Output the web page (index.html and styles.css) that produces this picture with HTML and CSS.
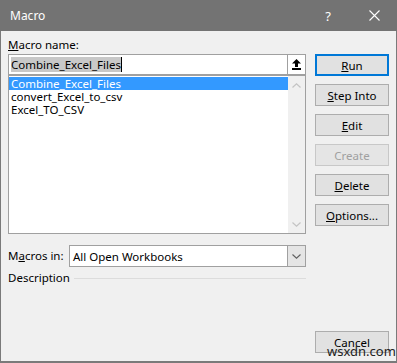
FILE: index.html
```html
<!DOCTYPE html>
<html lang="en">
<head>
    <meta charset="UTF-8">
    <title>Macro</title>
    <link rel="stylesheet" href="styles.css">
</head>
<body>
    <div class="window">
        <div class="titlebar">
            <span class="title">Macro</span>
            <span class="tb-btn help">?</span>
            <span class="tb-btn close">
                <svg width="11" height="11" viewBox="0 0 11 11"><path d="M0.5 0.5 L10.5 10.5 M10.5 0.5 L0.5 10.5" stroke="#fff" stroke-width="1.1" fill="none"/></svg>
            </span>
        </div>
        <div class="content">
            <div class="left">
                <label class="label"><u>M</u>acro name:</label>
                <div class="namebox">
                    <span class="selected-text">Combine_Excel_Files</span><span class="caret"></span>
                    <span class="up-btn">
                        <svg width="9" height="11" viewBox="0 0 9 11"><path d="M4.5 0 L9 4.5 L6 4.5 L6 8 L3 8 L3 4.5 L0 4.5 Z" fill="#000"/><rect x="0" y="9" width="9" height="2" fill="#000"/></svg>
                    </span>
                </div>
                <div class="listbox">
                    <ul class="items">
                        <li class="active">Combine_Excel_Files</li>
                        <li>convert_Excel_to_csv</li>
                        <li>Excel_TO_CSV</li>
                    </ul>
                    <div class="scrollbar">
                        <svg width="9" height="5" viewBox="0 0 9 5"><path d="M0.5 4.5 L4.5 0.8 L8.5 4.5" stroke="#c4c4c4" stroke-width="1.2" fill="none"/></svg>
                        <svg width="9" height="5" viewBox="0 0 9 5"><path d="M0.5 0.5 L4.5 4.2 L8.5 0.5" stroke="#c4c4c4" stroke-width="1.2" fill="none"/></svg>
                    </div>
                </div>
                <div class="row-in">
                    <span class="label">M<u>a</u>cros in:</span>
                    <div class="select">
                        <span class="select-text">All Open Workbooks</span>
                        <span class="drop-btn">
                            <svg width="9" height="5" viewBox="0 0 9 5"><path d="M0.5 0.5 L4.5 4.2 L8.5 0.5" stroke="#606060" stroke-width="1.1" fill="none"/></svg>
                        </span>
                    </div>
                </div>
                <div class="desc">
                    <span class="label">Description</span>
                    <span class="rule"></span>
                </div>
            </div>
            <div class="right">
                <button class="btn default"><u>R</u>un</button>
                <button class="btn"><u>S</u>tep Into</button>
                <button class="btn"><u>E</u>dit</button>
                <button class="btn disabled">Create</button>
                <button class="btn"><u>D</u>elete</button>
                <button class="btn"><u>O</u>ptions...</button>
                <button class="btn cancel">Cancel</button>
            </div>
        </div>
        <span class="watermark">wsxdn.com</span>
    </div>
</body>
</html>
```

FILE: styles.css
```css
body {
    margin: 0;
    font-family: "Noto Sans", "Open Sans", sans-serif;
    font-size: 11.5px;
    color: #000;
}
.window {
    position: relative;
    width: 397px;
    height: 363px;
    box-sizing: border-box;
    background-color: #f0f0f0;
    border-left: 1px solid #7a7a7a;
    border-right: 1px solid #7a7a7a;
    border-bottom: 2px solid #7a7a7a;
    display: flex;
    flex-direction: column;
}
.titlebar {
    height: 31px;
    background-color: #737373;
    color: #fff;
    display: flex;
    align-items: center;
    margin: 0 -1px;
    flex-shrink: 0;
}
.title {
    flex: 1;
    padding-left: 10px;
    font-size: 12px;
}
.tb-btn {
    width: 46px;
    height: 31px;
    display: flex;
    align-items: center;
    justify-content: center;
    font-size: 13px;
}
.content {
    flex: 1;
    display: flex;
    gap: 9px;
    padding: 0 7px 8px 7px;
}
.left {
    width: 299px;
    display: flex;
    flex-direction: column;
    padding-top: 5px;
}
.label {
    display: block;
    height: 18px;
    line-height: 18px;
}
.namebox {
    position: relative;
    height: 21px;
    box-sizing: border-box;
    border: 1px solid #a0a0a0;
    background-color: #fff;
    display: flex;
    align-items: center;
    padding-left: 2px;
}
.selected-text {
    background-color: #c8c8c8;
    line-height: 15px;
}
.caret {
    width: 1px;
    height: 15px;
    background-color: #000;
}
.up-btn {
    position: absolute;
    right: 0;
    top: 0;
    width: 18px;
    height: 19px;
    box-sizing: border-box;
    border-left: 1px solid #a0a0a0;
    display: flex;
    align-items: center;
    justify-content: center;
}
.listbox {
    height: 159px;
    box-sizing: border-box;
    border: 1px solid #a0a0a0;
    background-color: #fff;
    display: flex;
}
.items {
    list-style: none;
    margin: 0;
    padding: 0;
    flex: 1;
}
.items li {
    height: 13px;
    line-height: 13px;
    padding-left: 2px;
    white-space: nowrap;
}
.items li.active {
    margin-top: 1px;
    background-color: #3399ff;
    color: #fff;
}
.scrollbar {
    width: 17px;
    background-color: #f0f0f0;
    display: flex;
    flex-direction: column;
    justify-content: space-between;
    align-items: center;
    padding: 7px 0 6px;
}
.row-in {
    display: flex;
    align-items: center;
    margin-top: 11px;
}
.row-in .label {
    width: 61px;
}
.select {
    flex: 1;
    height: 22px;
    box-sizing: border-box;
    border: 1px solid #a0a0a0;
    background-color: #fff;
    display: flex;
    align-items: center;
}
.select-text {
    flex: 1;
    padding-left: 3px;
}
.drop-btn {
    width: 17px;
    height: 20px;
    background-color: #e5e5e5;
    border-left: 1px solid #a0a0a0;
    display: flex;
    align-items: center;
    justify-content: center;
}
.desc {
    display: flex;
    align-items: center;
    margin-top: 2px;
}
.rule {
    flex: 1;
    height: 1px;
    background-color: #dcdcdc;
    margin-left: 4px;
}
.right {
    width: 74px;
    display: flex;
    flex-direction: column;
    gap: 8px;
    padding-top: 23px;
}
.btn {
    height: 22px;
    width: 74px;
    box-sizing: border-box;
    background-color: #e1e1e1;
    border: 1px solid #adadad;
    font-family: inherit;
    font-size: 11.5px;
    color: #000;
    padding: 0;
}
.btn.default {
    border: 2px solid #0078d7;
}
.btn.disabled {
    color: #a0a0a0;
    background-color: #e5e5e5;
    border-color: #c8c8c8;
}
.btn.cancel {
    margin-top: auto;
}
.watermark {
    position: absolute;
    left: 326px;
    top: 342px;
    font-size: 13px;
    color: #222;
}
```
